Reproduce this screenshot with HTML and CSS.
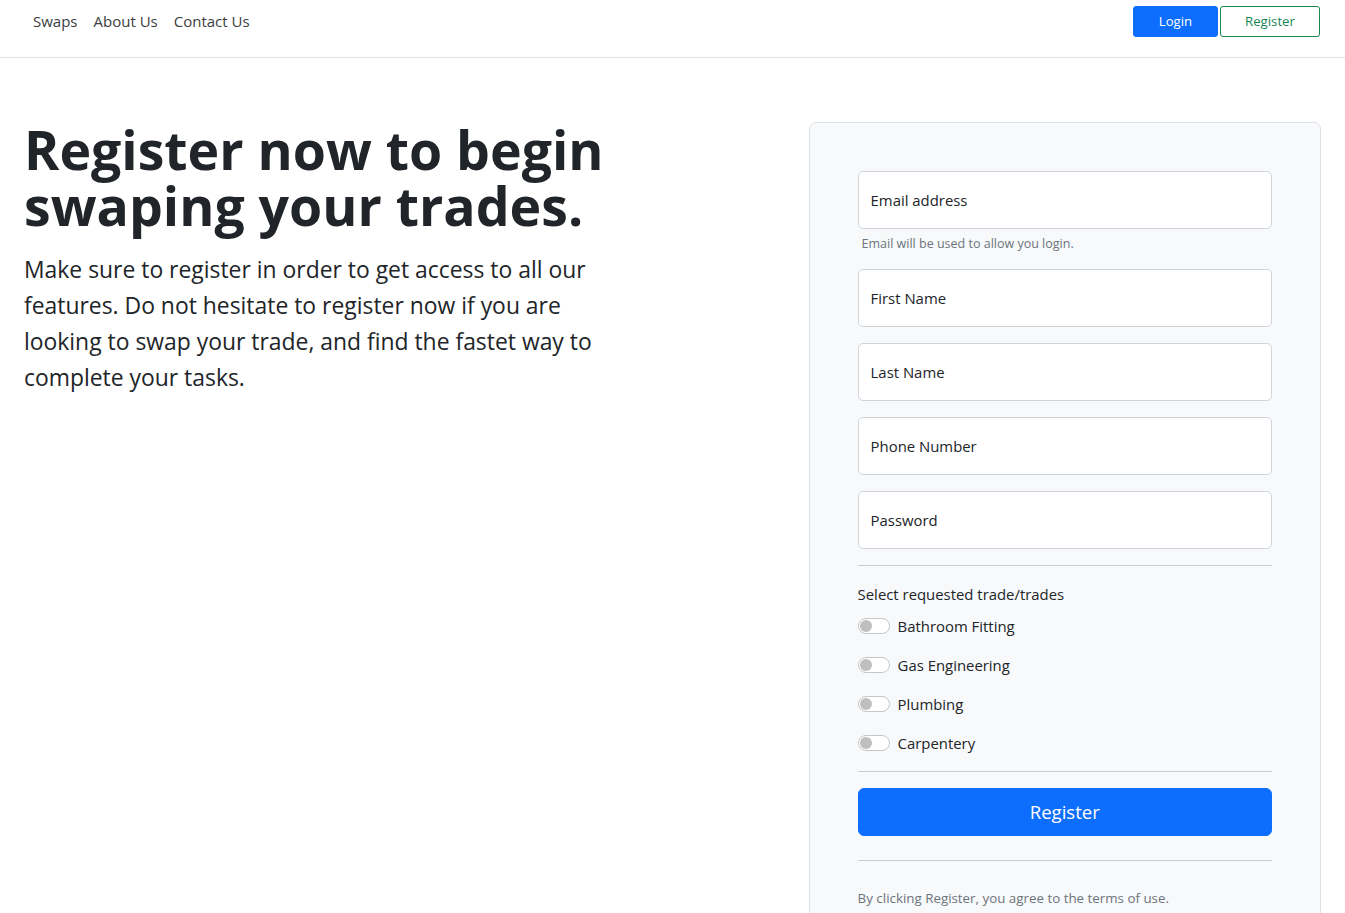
FILE: index.html
```html
<!DOCTYPE html>
<html lang="en">
<head>
<meta charset="utf-8">
<title>Register</title>
<link rel="stylesheet" href="styles.css">
</head>
<body>
<header class="navbar">
  <nav class="nav-links">
    <a class="nav-link" href="#">Swaps</a>
    <a class="nav-link" href="#">About Us</a>
    <a class="nav-link" href="#">Contact Us</a>
  </nav>
  <div class="nav-actions">
    <a class="btn btn-login" href="#">Login</a>
    <a class="btn btn-register-outline" href="#">Register</a>
  </div>
</header>

<main class="hero">
  <section class="hero-text">
    <h1 class="hero-title">Register now to begin swaping your trades.</h1>
    <p class="hero-lead">Make sure to register in order to get access to all our features. Do not hesitate to register now if you are looking to swap your trade, and find the fastet way to complete your tasks.</p>
  </section>

  <section class="hero-form-col">
    <form class="signup-card">
      <div class="field field-email">
        <div class="input">Email address</div>
        <div class="help">Email will be used to allow you login.</div>
      </div>
      <div class="field"><div class="input">First Name</div></div>
      <div class="field"><div class="input">Last Name</div></div>
      <div class="field"><div class="input">Phone Number</div></div>
      <div class="field"><div class="input">Password</div></div>
      <hr class="divider divider-first">
      <div class="trades-label">Select requested trade/trades</div>
      <div class="switches">
        <label class="switch-row"><span class="switch"></span>Bathroom Fitting</label>
        <label class="switch-row"><span class="switch"></span>Gas Engineering</label>
        <label class="switch-row"><span class="switch"></span>Plumbing</label>
        <label class="switch-row"><span class="switch"></span>Carpentery</label>
      </div>
      <hr class="divider divider-mid">
      <button type="button" class="btn-submit">Register</button>
      <hr class="divider divider-last">
      <small class="terms">By clicking Register, you agree to the terms of use.</small>
    </form>
  </section>
</main>
</body>
</html>
```

FILE: styles.css
```css
* { box-sizing: border-box; }

html, body {
  margin: 0;
  padding: 0;
  background: #ffffff;
}

body {
  font-family: "Open Sans", "Noto Sans", sans-serif;
  color: #212529;
  font-size: 15px;
  line-height: 1.5;
  overflow: hidden;
  height: 913px;
}

/* Navbar */
.navbar {
  height: 58px;
  border-bottom: 1px solid #dee2e6;
  display: flex;
  align-items: flex-start;
  justify-content: space-between;
  padding: 0 25px 0 25px;
}

.nav-links {
  display: flex;
  padding-top: 9px;
}

.nav-link {
  color: #3b3d40;
  text-decoration: none;
  font-size: 15px;
  line-height: 24px;
  padding: 0 8px;
}

.nav-actions {
  display: flex;
  gap: 2px;
  padding-top: 6px;
}

.btn {
  display: inline-flex;
  align-items: center;
  justify-content: center;
  height: 31px;
  font-size: 13.2px;
  text-decoration: none;
  border-radius: 3px;
  border: 1px solid transparent;
}

.btn-login {
  width: 85px;
  background: #0d6efd;
  border-color: #0d6efd;
  color: #ffffff;
}

.btn-register-outline {
  width: 100px;
  border-color: #198754;
  color: #198754;
  background: #ffffff;
}

/* Hero */
.hero {
  display: flex;
  align-items: flex-start;
  padding: 64px 24px 0 24px;
  gap: 48px;
}

.hero-text {
  flex: 0 0 736.6px;
  width: 736.6px;
}

.hero-title {
  margin: 0 0 18px 0;
  font-size: 53.6px;
  font-weight: 700;
  line-height: 56px;
  color: #212529;
}

.hero-lead {
  width: 614px;
  margin: 0;
  font-size: 22.9px;
  line-height: 36px;
  color: #212529;
}

.hero-form-col {
  flex: 0 0 512.4px;
  width: 512.4px;
}

.signup-card {
  background: #f8f9fa;
  border: 1px solid #dee2e6;
  border-radius: 7px;
  padding: 48px 48px 40px 48px;
  height: 900px;
}

.field {
  margin-bottom: 16px;
}

.field-email {
  margin-bottom: 15px;
}

.input {
  height: 58px;
  background: #ffffff;
  border: 1px solid #ced4da;
  border-radius: 5px;
  padding: 0 12px;
  display: flex;
  align-items: center;
  font-size: 14.9px;
  color: #212529;
}

.help {
  margin-top: 4px;
  padding-left: 4px;
  font-size: 12.5px;
  line-height: 21px;
  color: #6c757d;
}

.divider {
  border: 0;
  border-top: 1px solid #c9cdd1;
  margin: 0;
}

.divider-first { margin-bottom: 16px; }

.trades-label {
  font-size: 14.9px;
  line-height: 24px;
  margin-bottom: 8px;
}

.switches {
  display: flex;
  flex-direction: column;
  gap: 15px;
  margin-bottom: 16px;
}

.switch-row {
  display: flex;
  align-items: center;
  height: 24px;
  font-size: 14.9px;
  color: #212529;
}

.switch {
  position: relative;
  width: 32px;
  height: 16px;
  margin-right: 8px;
  border: 1px solid #c4c6c8;
  border-radius: 8px;
  background: #ffffff;
}

.switch::after {
  content: "";
  position: absolute;
  left: 1px;
  top: 1px;
  width: 12px;
  height: 12px;
  border-radius: 50%;
  background: #bfbfbf;
}

.divider-mid { margin-bottom: 16px; }

.btn-submit {
  display: block;
  width: 100%;
  height: 48px;
  background: #0d6efd;
  border: 1px solid #0d6efd;
  border-radius: 6px;
  color: #ffffff;
  font-family: inherit;
  font-size: 18.6px;
  line-height: 30px;
  padding: 0;
}

.divider-last { margin-top: 24px; margin-bottom: 24px; }

.terms {
  display: block;
  font-size: 13.35px;
  line-height: 26px;
  color: #6c757d;
}
```
